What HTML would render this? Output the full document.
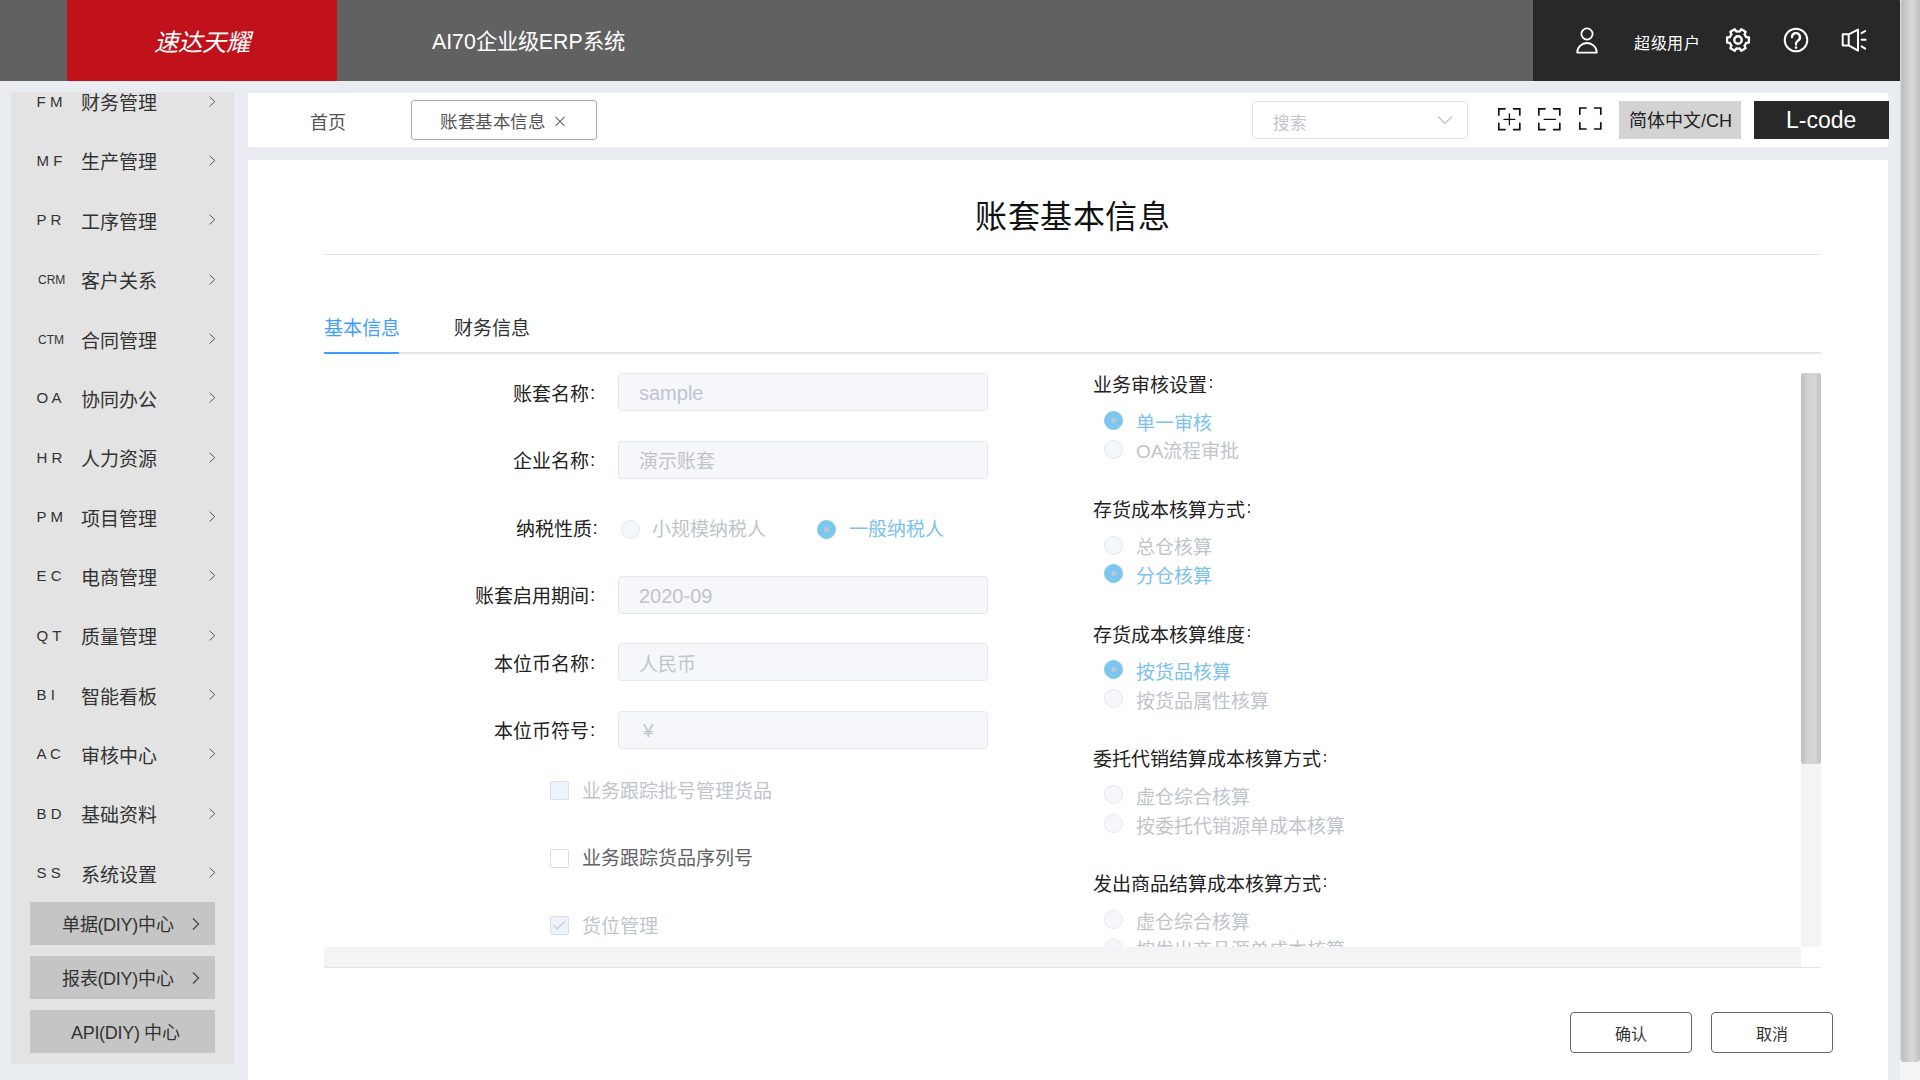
<!DOCTYPE html>
<html lang="zh-CN">
<head>
<meta charset="utf-8">
<style>
*{box-sizing:border-box;margin:0;padding:0}
html,body{width:1920px;height:1080px;overflow:hidden;background:#e9edf2;font-family:"Liberation Sans",sans-serif;}
.a{position:absolute}
.t{position:absolute;white-space:nowrap;line-height:1}
#hdr{left:0;top:0;width:1900px;height:81px;background:#616161}
#logo{left:67px;top:0;width:270px;height:81px;background:#c1121c}
#hdark{left:1533px;top:0;width:367px;height:81px;background:#282828}
#side{left:11px;top:92px;width:223px;height:972px;background:#e3e3e3;overflow:hidden}
#tabs{left:248px;top:93px;width:1640px;height:54px;background:#fff}
#card{left:248px;top:160px;width:1640px;height:920px;background:#fff}
#vscroll{left:1900px;top:0;width:20px;height:1080px;background:#f4f4f4}
#vthumb{left:1900px;top:0;width:20px;height:1062px;border-radius:3px 0 4px 4px;background:linear-gradient(90deg,#dcdcdc 0,#bdbdbd 12%,#cdcdcd 35%,#d9d9d9 62%,#c0c0c0 100%)}
.mc{font-size:15px;color:#333}
.mc2{font-size:12px;color:#333}
.mn{font-size:19px;color:#333}
.sb{width:185px;height:43px;background:#c5c5c5}
.sbt{font-size:18px;color:#333;letter-spacing:-0.3px}
.lbl{font-size:19px;color:#222;text-align:right}
.inp{position:absolute;left:618px;width:370px;height:38px;background:#f5f7fa;border:1px solid #e4e7ed;border-radius:4px}
.ph{font-size:19px;color:#c0c4cc}
.rad{position:absolute;width:19px;height:19px;border-radius:50%;background:#f5f7fa;border:1px solid #e4e7ed}
.rad.on{background:#7cc7ef;border-color:#7cc7ef}
.rad.on::after{content:"";position:absolute;left:6px;top:6px;width:5px;height:5px;border-radius:50%;background:#c0c4cc}
.rt{font-size:19px;color:#c0c4cc}
.rt.on{color:#7cc2ec}
.sec{font-size:19px;color:#222}
.cb{position:absolute;left:550px;width:19px;height:19px;border:1px solid #dcdfe6;border-radius:2px;background:#fff}
.cb.dis{background:#edf2fc;border-color:#dcdfe6}
.cb.chk::after{content:"";position:absolute;left:5px;top:1px;width:5px;height:10px;border-right:1px solid #c0c4cc;border-bottom:1px solid #c0c4cc;transform:rotate(45deg)}
.btn{position:absolute;width:122px;height:41px;border:1px solid #666;border-radius:4px;background:#fff;font-size:16px;color:#333;text-align:center;line-height:43px}
</style>
</head>
<body>
<!-- header -->
<div id="hdr" class="a"></div>
<div id="logo" class="a"></div>
<div class="t" style="left:154px;top:31px;font-size:24.3px;color:#fff;font-style:italic">速达天耀</div>
<div class="t" style="left:432px;top:31.5px;font-size:21.3px;color:#fff">AI70企业级ERP系统</div>
<div id="hdark" class="a"></div>
<svg class="a" style="left:1570px;top:20px" width="34" height="40" viewBox="0 0 34 40">
  <circle cx="17" cy="14" r="5.6" fill="none" stroke="#fff" stroke-width="1.8"/>
  <path d="M7.2 32.6 A9.8 9.6 0 0 1 26.8 32.6 Z" fill="none" stroke="#fff" stroke-width="1.8" stroke-linejoin="round"/>
</svg>
<div class="t" style="left:1634px;top:36px;font-size:16px;letter-spacing:0.6px;color:#fff">超级用户</div>
<svg class="a" style="left:1720px;top:21.6px" width="36" height="36" viewBox="0 0 36 36">
  <path fill="none" stroke="#fff" stroke-width="2.3" stroke-linejoin="round" d="M26.13 15.20 L28.91 15.48 L28.91 20.52 L26.13 20.80 A8.6 8.6 0 0 1 24.49 23.64 L25.64 26.19 L21.27 28.71 L19.64 26.44 A8.6 8.6 0 0 1 16.36 26.44 L14.73 28.71 L10.36 26.19 L11.51 23.64 A8.6 8.6 0 0 1 9.87 20.80 L7.09 20.52 L7.09 15.48 L9.87 15.20 A8.6 8.6 0 0 1 11.51 12.36 L10.36 9.81 L14.73 7.29 L16.36 9.56 A8.6 8.6 0 0 1 19.64 9.56 L21.27 7.29 L25.64 9.81 L24.49 12.36 A8.6 8.6 0 0 1 26.13 15.20 Z"/>
  <circle cx="18" cy="18" r="3.7" fill="none" stroke="#fff" stroke-width="2.4"/>
</svg>
<svg class="a" style="left:1778px;top:22px" width="36" height="36" viewBox="0 0 36 36">
  <circle cx="18" cy="18" r="11.3" fill="none" stroke="#fff" stroke-width="2"/>
  <path d="M14 15.2 a4 4 0 1 1 5.9 3.5 c-1.3 0.8 -1.9 1.6 -1.9 3.1 v0.8" fill="none" stroke="#fff" stroke-width="2.3" stroke-linecap="round"/>
  <circle cx="18" cy="25.6" r="1.3" fill="#fff"/>
</svg>
<svg class="a" style="left:1836px;top:22px" width="36" height="36" viewBox="0 0 36 36">
  <path d="M6.7 12.3 h6 l9.3 -4.7 v21 l-9.3 -5.2 h-6 z M12.7 12.3 v11.1" fill="none" stroke="#fff" stroke-width="2" stroke-linejoin="round"/>
  <path d="M25.6 11.2 l3.6 -2.2 M25.6 17.8 h4 M25.6 24.4 l3.6 2.2" fill="none" stroke="#fff" stroke-width="2" stroke-linecap="round"/>
</svg>

<!-- sidebar -->
<div id="side" class="a"></div>
<div id="menu">
<div class="t mc" style="left:36.6px;top:93.7px">F M</div>
<div class="t mn" style="left:81px;top:94.1px">财务管理</div>
<svg class="a" style="left:207px;top:94.5px" width="10" height="14" viewBox="0 0 10 14"><path d="M2.6 1.8 L7.8 6.6 L2.6 11.4" fill="none" stroke="#555" stroke-width="1"/></svg>
<div class="t mc" style="left:36.6px;top:153.0px">M F</div>
<div class="t mn" style="left:81px;top:153.4px">生产管理</div>
<svg class="a" style="left:207px;top:153.8px" width="10" height="14" viewBox="0 0 10 14"><path d="M2.6 1.8 L7.8 6.6 L2.6 11.4" fill="none" stroke="#555" stroke-width="1"/></svg>
<div class="t mc" style="left:36.6px;top:212.4px">P R</div>
<div class="t mn" style="left:81px;top:212.8px">工序管理</div>
<svg class="a" style="left:207px;top:213.2px" width="10" height="14" viewBox="0 0 10 14"><path d="M2.6 1.8 L7.8 6.6 L2.6 11.4" fill="none" stroke="#555" stroke-width="1"/></svg>
<div class="t mc2" style="left:38px;top:274.3px">CRM</div>
<div class="t mn" style="left:81px;top:272.1px">客户关系</div>
<svg class="a" style="left:207px;top:272.5px" width="10" height="14" viewBox="0 0 10 14"><path d="M2.6 1.8 L7.8 6.6 L2.6 11.4" fill="none" stroke="#555" stroke-width="1"/></svg>
<div class="t mc2" style="left:38px;top:333.7px">CTM</div>
<div class="t mn" style="left:81px;top:331.5px">合同管理</div>
<svg class="a" style="left:207px;top:331.9px" width="10" height="14" viewBox="0 0 10 14"><path d="M2.6 1.8 L7.8 6.6 L2.6 11.4" fill="none" stroke="#555" stroke-width="1"/></svg>
<div class="t mc" style="left:36.6px;top:390.4px">O A</div>
<div class="t mn" style="left:81px;top:390.8px">协同办公</div>
<svg class="a" style="left:207px;top:391.2px" width="10" height="14" viewBox="0 0 10 14"><path d="M2.6 1.8 L7.8 6.6 L2.6 11.4" fill="none" stroke="#555" stroke-width="1"/></svg>
<div class="t mc" style="left:36.6px;top:449.7px">H R</div>
<div class="t mn" style="left:81px;top:450.1px">人力资源</div>
<svg class="a" style="left:207px;top:450.5px" width="10" height="14" viewBox="0 0 10 14"><path d="M2.6 1.8 L7.8 6.6 L2.6 11.4" fill="none" stroke="#555" stroke-width="1"/></svg>
<div class="t mc" style="left:36.6px;top:509.1px">P M</div>
<div class="t mn" style="left:81px;top:509.5px">项目管理</div>
<svg class="a" style="left:207px;top:509.9px" width="10" height="14" viewBox="0 0 10 14"><path d="M2.6 1.8 L7.8 6.6 L2.6 11.4" fill="none" stroke="#555" stroke-width="1"/></svg>
<div class="t mc" style="left:36.6px;top:568.4px">E C</div>
<div class="t mn" style="left:81px;top:568.8px">电商管理</div>
<svg class="a" style="left:207px;top:569.2px" width="10" height="14" viewBox="0 0 10 14"><path d="M2.6 1.8 L7.8 6.6 L2.6 11.4" fill="none" stroke="#555" stroke-width="1"/></svg>
<div class="t mc" style="left:36.6px;top:627.8px">Q T</div>
<div class="t mn" style="left:81px;top:628.2px">质量管理</div>
<svg class="a" style="left:207px;top:628.6px" width="10" height="14" viewBox="0 0 10 14"><path d="M2.6 1.8 L7.8 6.6 L2.6 11.4" fill="none" stroke="#555" stroke-width="1"/></svg>
<div class="t mc" style="left:36.6px;top:687.1px">B I</div>
<div class="t mn" style="left:81px;top:687.5px">智能看板</div>
<svg class="a" style="left:207px;top:687.9px" width="10" height="14" viewBox="0 0 10 14"><path d="M2.6 1.8 L7.8 6.6 L2.6 11.4" fill="none" stroke="#555" stroke-width="1"/></svg>
<div class="t mc" style="left:36.6px;top:746.4px">A C</div>
<div class="t mn" style="left:81px;top:746.8px">审核中心</div>
<svg class="a" style="left:207px;top:747.2px" width="10" height="14" viewBox="0 0 10 14"><path d="M2.6 1.8 L7.8 6.6 L2.6 11.4" fill="none" stroke="#555" stroke-width="1"/></svg>
<div class="t mc" style="left:36.6px;top:805.8px">B D</div>
<div class="t mn" style="left:81px;top:806.2px">基础资料</div>
<svg class="a" style="left:207px;top:806.6px" width="10" height="14" viewBox="0 0 10 14"><path d="M2.6 1.8 L7.8 6.6 L2.6 11.4" fill="none" stroke="#555" stroke-width="1"/></svg>
<div class="t mc" style="left:36.6px;top:865.1px">S S</div>
<div class="t mn" style="left:81px;top:865.5px">系统设置</div>
<svg class="a" style="left:207px;top:865.9px" width="10" height="14" viewBox="0 0 10 14"><path d="M2.6 1.8 L7.8 6.6 L2.6 11.4" fill="none" stroke="#555" stroke-width="1"/></svg>
<div class="a sb" style="left:30px;top:902px"></div>
<div class="t sbt" style="left:62px;top:915.5px">单据(DIY)中心</div>
<svg class="a" style="left:190px;top:916px" width="12" height="16" viewBox="0 0 12 16"><path d="M3 2.5 L8.6 8 L3 13.5" fill="none" stroke="#444" stroke-width="1.2"/></svg>
<div class="a sb" style="left:30px;top:956px"></div>
<div class="t sbt" style="left:62px;top:969.5px">报表(DIY)中心</div>
<svg class="a" style="left:190px;top:970px" width="12" height="16" viewBox="0 0 12 16"><path d="M3 2.5 L8.6 8 L3 13.5" fill="none" stroke="#444" stroke-width="1.2"/></svg>
<div class="a sb" style="left:30px;top:1010px"></div>
<div class="t sbt" style="left:71px;top:1023.5px">API(DIY) 中心</div>
</div><!--/menu-->

<!-- tab bar -->
<div id="tabs" class="a"></div>
<div class="t" style="left:309.5px;top:113.5px;font-size:18px;color:#555">首页</div>
<div class="a" style="left:411px;top:100px;width:186px;height:40px;border:1px solid #aaa;border-radius:3px"></div>
<div class="t" style="left:440px;top:114px;font-size:17.5px;letter-spacing:0.6px;color:#555">账套基本信息</div>
<svg class="a" style="left:554px;top:115px" width="12" height="12" viewBox="0 0 12 12"><path d="M1.5 1.8 L10.5 10.8 M10.5 1.8 L1.5 10.8" stroke="#666" stroke-width="1.1"/></svg>

<div class="a" style="left:1252px;top:101px;width:216px;height:38px;border:1px solid #dcdfe6;border-radius:4px;background:#fff"></div>
<div class="t" style="left:1273px;top:114.5px;font-size:16.5px;color:#c0c4cc">搜索</div>
<svg class="a" style="left:1436px;top:113px" width="18" height="14" viewBox="0 0 18 14"><path d="M2 3.5 L9 10.5 L16 3.5" fill="none" stroke="#c0c4cc" stroke-width="1.4"/></svg>

<svg class="a" style="left:1490px;top:100px" width="120" height="40" viewBox="0 0 120 40"><path d="M15.0 8.8 H8.8 V15.0 M23.6 8.8 H29.8 V15.0 M8.8 23.400000000000002 V29.6 H15.0 M29.8 23.400000000000002 V29.6 H23.6 M55.0 8.8 H48.8 V15.0 M63.599999999999994 8.8 H69.8 V15.0 M48.8 23.400000000000002 V29.6 H55.0 M69.8 23.400000000000002 V29.6 H63.599999999999994 M96.0 8 H89.8 V14.2 M104.6 8 H110.8 V14.2 M89.8 22.8 V29 H96.0 M110.8 22.8 V29 H104.6" fill="none" stroke="#111" stroke-width="1.7" stroke-linecap="round"/><path d="M19.4 14 V24.8 M14 19.4 H24.8 M54.2 19.4 H65.4" fill="none" stroke="#111" stroke-width="1.3" stroke-linecap="round"/></svg>
<div class="a" style="left:1619px;top:101px;width:122px;height:38px;background:#d3d3d3"></div>
<div class="t" style="left:1629px;top:111.5px;font-size:18px;color:#222">简体中文/CH</div>
<div class="a" style="left:1754px;top:101px;width:135px;height:38px;background:#282828"></div>
<div class="t" style="left:1786px;top:109px;font-size:23px;color:#fff">L-code</div>

<!-- card -->
<div id="card" class="a"></div>
<div class="t" style="left:975px;top:201px;font-size:32px;letter-spacing:0.5px;color:#111">账套基本信息</div>
<div class="a" style="left:324px;top:254px;width:1497px;height:1px;background:#e5e5e5"></div>
<div class="t" style="left:323.5px;top:318.5px;font-size:19px;color:#409eff">基本信息</div>
<div class="t" style="left:453.5px;top:318.5px;font-size:19px;color:#303133">财务信息</div>
<div class="a" style="left:324px;top:352px;width:1497px;height:2px;background:#e4e7ed"></div>
<div class="a" style="left:324px;top:352px;width:75px;height:2px;background:#409eff"></div>

<div id="form">
<div class="a" style="left:324px;top:373px;width:1477px;height:574px;overflow:hidden">
<div class="a" style="left:-324px;top:-373px;width:1920px;height:1080px">
<div class="t lbl" style="right:1331px;top:384.7px">账套名称</div>
<div class="t lbl" style="left:590px;top:382.7px">:</div>
<div class="inp" style="top:373.2px"></div>
<div class="t ph" style="left:639px;top:383.2px;font-size:20px">sample</div>
<div class="t lbl" style="right:1331px;top:452.2px">企业名称</div>
<div class="t lbl" style="left:590px;top:450.2px">:</div>
<div class="inp" style="top:440.7px"></div>
<div class="t ph" style="left:639px;top:452.2px">演示账套</div>
<div class="t lbl" style="right:1328.5px;top:519.7px">纳税性质</div>
<div class="t lbl" style="left:592.5px;top:517.7px">:</div>
<div class="t lbl" style="right:1331px;top:587.2px">账套启用期间</div>
<div class="t lbl" style="left:590px;top:585.2px">:</div>
<div class="inp" style="top:575.7px"></div>
<div class="t ph" style="left:639px;top:585.7px;font-size:20px">2020-09</div>
<div class="t lbl" style="right:1331px;top:654.7px">本位币名称</div>
<div class="t lbl" style="left:590px;top:652.7px">:</div>
<div class="inp" style="top:643.2px"></div>
<div class="t ph" style="left:639px;top:654.7px">人民币</div>
<div class="t lbl" style="right:1331px;top:722.2px">本位币符号</div>
<div class="t lbl" style="left:590px;top:720.2px">:</div>
<div class="inp" style="top:710.7px"></div>
<div class="t ph" style="left:643px;top:720.7px">¥</div>
<div class="rad" style="left:621px;top:520.2px"></div>
<div class="t rt" style="left:652px;top:520.2px">小规模纳税人</div>
<div class="rad on" style="left:817px;top:520.2px"></div>
<div class="t rt on" style="left:849px;top:520.2px">一般纳税人</div>
<div class="cb dis" style="top:781.2px"></div>
<div class="t" style="left:582px;top:781.9px;font-size:19px;color:#c0c4cc">业务跟踪批号管理货品</div>
<div class="cb " style="top:848.7px"></div>
<div class="t" style="left:582px;top:849.4px;font-size:19px;color:#606266">业务跟踪货品序列号</div>
<div class="cb dis chk" style="top:916.2px"></div>
<div class="t" style="left:582px;top:916.9px;font-size:19px;color:#c0c4cc">货位管理</div>
<div class="t sec" style="left:1093px;top:376.0px">业务审核设置</div>
<div class="a" style="left:1210px;top:379.3px;width:2px;height:2px;background:#555"></div><div class="a" style="left:1210px;top:385.8px;width:2px;height:2px;background:#555"></div>
<div class="rad on" style="left:1104px;top:410.9px"></div>
<div class="t rt on" style="left:1136px;top:413.7px">单一审核</div>
<div class="rad" style="left:1104px;top:439.5px"></div>
<div class="t rt" style="left:1136px;top:442.3px">OA流程审批</div>
<div class="t sec" style="left:1093px;top:500.8px">存货成本核算方式</div>
<div class="a" style="left:1248px;top:504.1px;width:2px;height:2px;background:#555"></div><div class="a" style="left:1248px;top:510.6px;width:2px;height:2px;background:#555"></div>
<div class="rad" style="left:1104px;top:535.6px"></div>
<div class="t rt" style="left:1136px;top:538.4px">总仓核算</div>
<div class="rad on" style="left:1104px;top:564.2px"></div>
<div class="t rt on" style="left:1136px;top:567.0px">分仓核算</div>
<div class="t sec" style="left:1093px;top:625.5px">存货成本核算维度</div>
<div class="a" style="left:1248px;top:628.8px;width:2px;height:2px;background:#555"></div><div class="a" style="left:1248px;top:635.3px;width:2px;height:2px;background:#555"></div>
<div class="rad on" style="left:1104px;top:660.4px"></div>
<div class="t rt on" style="left:1136px;top:663.2px">按货品核算</div>
<div class="rad" style="left:1104px;top:689.0px"></div>
<div class="t rt" style="left:1136px;top:691.8px">按货品属性核算</div>
<div class="t sec" style="left:1093px;top:750.2px">委托代销结算成本核算方式</div>
<div class="a" style="left:1324px;top:753.5px;width:2px;height:2px;background:#555"></div><div class="a" style="left:1324px;top:760.0px;width:2px;height:2px;background:#555"></div>
<div class="rad" style="left:1104px;top:785.1px"></div>
<div class="t rt" style="left:1136px;top:787.9px">虚仓综合核算</div>
<div class="rad" style="left:1104px;top:813.7px"></div>
<div class="t rt" style="left:1136px;top:816.5px">按委托代销源单成本核算</div>
<div class="t sec" style="left:1093px;top:875.0px">发出商品结算成本核算方式</div>
<div class="a" style="left:1324px;top:878.3px;width:2px;height:2px;background:#555"></div><div class="a" style="left:1324px;top:884.8px;width:2px;height:2px;background:#555"></div>
<div class="rad" style="left:1104px;top:909.9px"></div>
<div class="t rt" style="left:1136px;top:912.7px">虚仓综合核算</div>
<div class="rad" style="left:1104px;top:938.5px"></div>
<div class="t rt" style="left:1136px;top:941.3px">按发出商品源单成本核算</div>
</div></div>
</div><!--/form-->

<!-- inner scrollbars -->
<div class="a" style="left:1801px;top:373px;width:20px;height:574px;background:#f4f4f4"></div>
<div class="a" style="left:1801px;top:373px;width:20px;height:391px;border-radius:3px;background:linear-gradient(90deg,#bdbdbd 0,#d2d2d2 30%,#d6d6d6 70%,#c2c2c2 100%)"></div>
<div class="a" style="left:324px;top:947px;width:1477px;height:20px;background:#f4f4f4"></div>
<div class="a" style="left:324px;top:967px;width:1497px;height:1px;background:#e5e5e5"></div>

<div class="btn" style="left:1570px;top:1012px">确认</div>
<div class="btn" style="left:1711px;top:1012px">取消</div>

<!-- page scrollbar -->
<div id="vscroll" class="a"></div>
<div id="vthumb" class="a"></div>
</body>
</html>
